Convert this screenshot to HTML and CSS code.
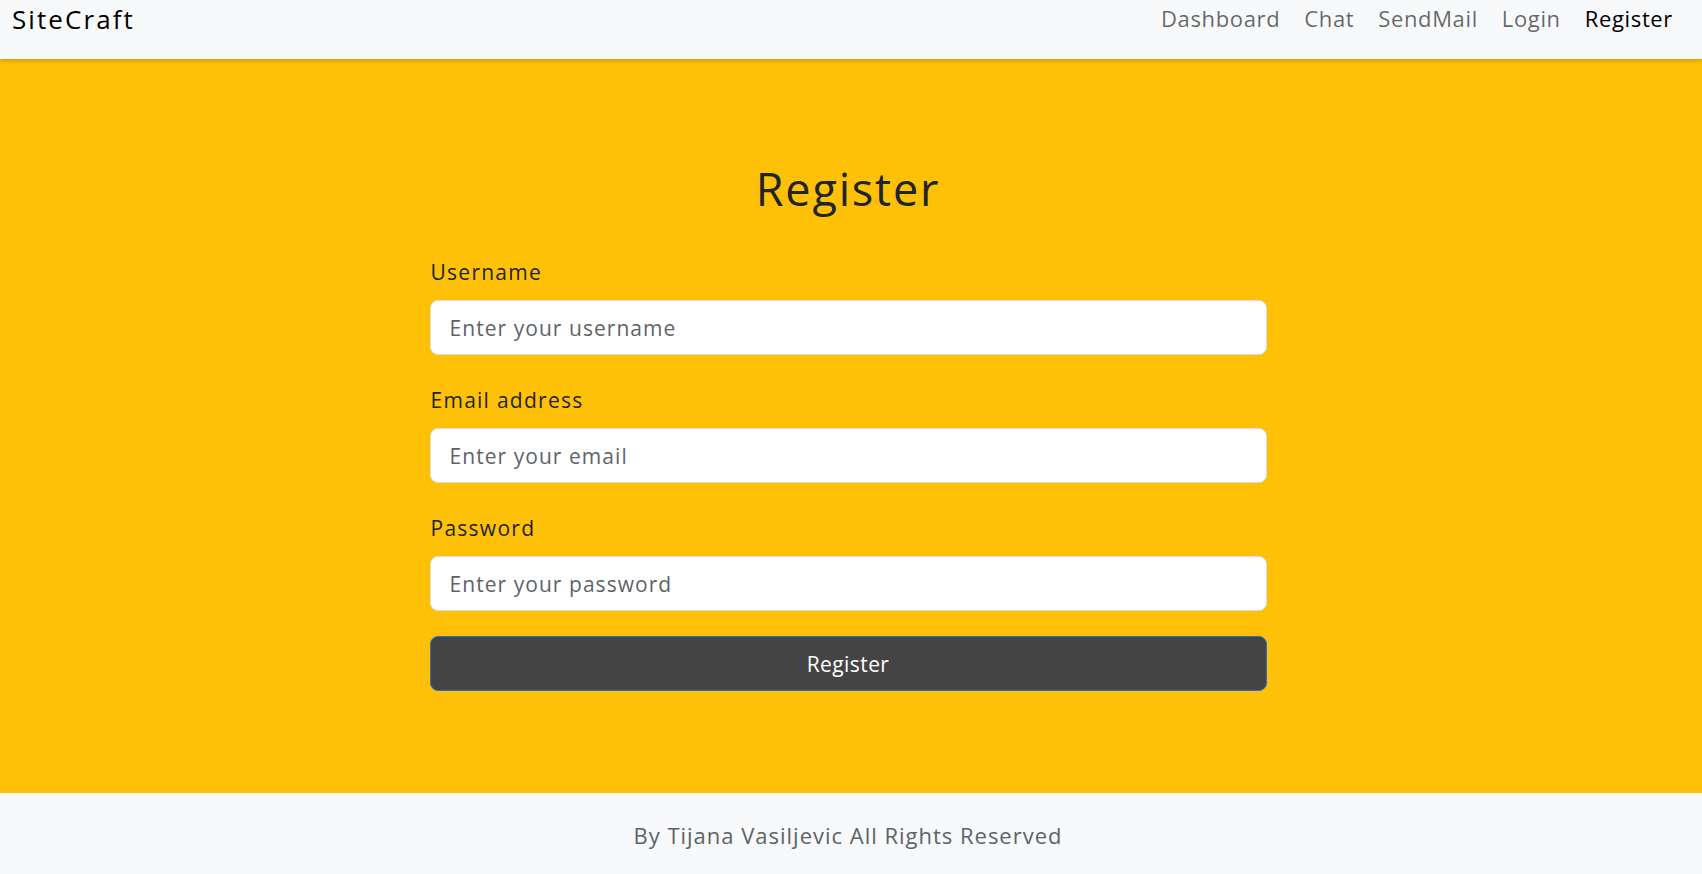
FILE: index.html
```html
<!DOCTYPE html>
<html lang="en">
<head>
<meta charset="utf-8">
<title>SiteCraft - Register</title>
<link rel="stylesheet" href="styles.css">
</head>
<body>
<div class="page">
  <nav class="navbar">
    <a class="brand" href="#">SiteCraft</a>
    <ul class="nav">
      <li><a class="nav-link" href="#">Dashboard</a></li>
      <li><a class="nav-link" href="#">Chat</a></li>
      <li><a class="nav-link" href="#">SendMail</a></li>
      <li><a class="nav-link" href="#">Login</a></li>
      <li><a class="nav-link active" href="#">Register</a></li>
    </ul>
  </nav>
  <main class="main">
    <form class="form">
      <h1 class="title">Register</h1>
      <div class="field">
        <label class="label" for="username">Username</label>
        <input class="input" id="username" type="text" placeholder="Enter your username">
      </div>
      <div class="field">
        <label class="label" for="email">Email address</label>
        <input class="input" id="email" type="email" placeholder="Enter your email">
      </div>
      <div class="field">
        <label class="label" for="password">Password</label>
        <input class="input" id="password" type="password" placeholder="Enter your password">
      </div>
      <button class="btn" type="button">Register</button>
    </form>
  </main>
  <footer class="footer">
    <p class="footer-text">By Tijana Vasiljevic All Rights Reserved</p>
  </footer>
</div>
</body>
</html>
```

FILE: styles.css
```css
* { box-sizing: border-box; }
html, body { margin: 0; padding: 0; }
body {
  font-family: "Open Sans", "Noto Sans", sans-serif;
  color: #212529;
  letter-spacing: 0.04em;
}
.page {
  display: flex;
  flex-direction: column;
  min-height: 874px;
}
.navbar {
  height: 59px;
  background: #f8f9fa;
  display: flex;
  justify-content: space-between;
  align-items: flex-start;
  padding: 0 17px 0 12px;
  box-shadow: 0 2px 4px rgba(0,0,0,0.18);
  position: relative;
  z-index: 1;
}
.brand {
  font-size: 26px;
  line-height: 38px;
  color: #000;
  text-decoration: none;
  font-weight: 500;
  letter-spacing: 0.08em;
}
.nav {
  list-style: none;
  margin: 0;
  padding: 0;
  display: flex;
}
.nav-link {
  display: block;
  font-size: 22px;
  line-height: 36px;
  padding: 0 12px;
  color: rgba(0,0,0,0.6);
  text-decoration: none;
}
.nav-link.active { color: #000; }
.main {
  flex: 1;
  background: #ffc107;
  display: flex;
  justify-content: center;
  padding: 103px 6px 0 0;
}
.form {
  width: 837px;
  display: flex;
  flex-direction: column;
}
.title {
  margin: 0 0 41px;
  text-align: center;
  font-size: 45px;
  line-height: 54px;
  font-weight: 500;
  letter-spacing: 0.04em;
}
.field {
  display: flex;
  flex-direction: column;
  gap: 13px;
  margin-bottom: 30px;
}
.field:nth-of-type(3) { margin-bottom: 25px; }
.label {
  font-size: 21px;
  line-height: 30px;
  padding-left: 1px;
  letter-spacing: 0.06em;
}
.input {
  height: 55px;
  border: 1px solid #dcdcdc;
  border-radius: 8px;
  background: #fff;
  padding: 0 19px;
  font-family: inherit;
  font-size: 21px;
  letter-spacing: 0.05em;
  color: #212529;
}
.input::placeholder { color: #5f6368; }
.btn {
  height: 55px;
  background: #444444;
  border: 1px solid #2b6fd6;
  border-radius: 8px;
  color: #fff;
  font-family: inherit;
  font-size: 21px;
  letter-spacing: 0.02em;
}
.footer {
  height: 81px;
  background: #f8f9fa;
  display: flex;
  align-items: center;
  justify-content: center;
  padding: 2px 6px 0 0;
}
.footer-text {
  margin: 0;
  font-size: 22px;
  color: #5c636a;
  letter-spacing: 0.045em;
}
```
